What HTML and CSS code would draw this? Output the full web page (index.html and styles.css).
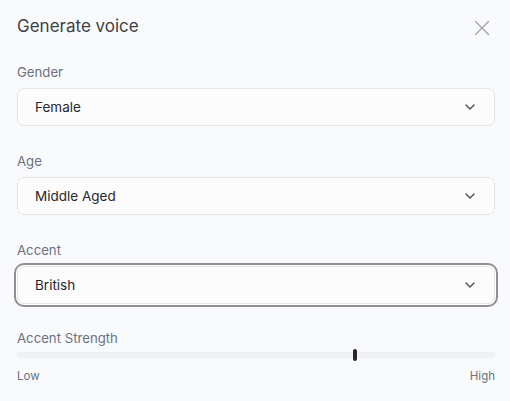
FILE: index.html
```html
<!DOCTYPE html>
<html lang="en">
<head>
<meta charset="utf-8">
<link rel="stylesheet" href="styles.css">
</head>
<body>
<div class="panel">
  <div class="header">
    <h1 class="title">Generate voice</h1>
    <button class="close" aria-label="Close">
      <svg width="16" height="16" viewBox="0 0 16 16" fill="none" stroke="currentColor" stroke-width="1.3" stroke-linecap="round"><path d="M1.5 1.5L14.5 14.5M14.5 1.5L1.5 14.5"/></svg>
    </button>
  </div>
  <div class="fields">
    <div class="field">
      <div class="label">Gender</div>
      <div class="select"><span>Female</span>
        <svg class="chev" width="16" height="16" viewBox="0 0 24 24" fill="none" stroke="currentColor" stroke-width="2.2" stroke-linecap="round" stroke-linejoin="round"><path d="M6 9l6 6 6-6"/></svg>
      </div>
    </div>
    <div class="field">
      <div class="label">Age</div>
      <div class="select"><span>Middle Aged</span>
        <svg class="chev" width="16" height="16" viewBox="0 0 24 24" fill="none" stroke="currentColor" stroke-width="2.2" stroke-linecap="round" stroke-linejoin="round"><path d="M6 9l6 6 6-6"/></svg>
      </div>
    </div>
    <div class="field">
      <div class="label">Accent</div>
      <div class="select focused"><span>British</span>
        <svg class="chev" width="16" height="16" viewBox="0 0 24 24" fill="none" stroke="currentColor" stroke-width="2.2" stroke-linecap="round" stroke-linejoin="round"><path d="M6 9l6 6 6-6"/></svg>
      </div>
    </div>
    <div class="field strength">
      <div class="label">Accent Strength</div>
      <div class="slider">
        <div class="track"></div>
        <div class="thumb" style="left: 70.2%"></div>
      </div>
      <div class="range-labels"><span>Low</span><span>High</span></div>
    </div>
  </div>
</div>
</body>
</html>
```
FILE: styles.css
```css
* { box-sizing: border-box; }
html, body { margin: 0; padding: 0; }
body {
  background: #f9fafb;
  font-family: "Inter", "Liberation Sans", sans-serif;
  width: 510px;
  height: 401px;
  overflow: hidden;
}
.panel {
  padding: 12px 15px 0 17px;
}
.header {
  display: flex;
  justify-content: space-between;
  align-items: flex-start;
  height: 28px;
}
.title {
  margin: 0;
  font-size: 17px;
  line-height: 28px;
  font-weight: 400;
  color: #3f3f46;
}
.close {
  border: 0;
  background: none;
  padding: 0;
  margin: 8px 5px 0 0;
  width: 16px;
  height: 16px;
  color: #a1a1aa;
  display: block;
}
.close svg { display: block; }
.fields {
  margin-top: 22px;
  display: flex;
  flex-direction: column;
  gap: 25px;
}
.field {
  display: flex;
  flex-direction: column;
}
.field.strength {
  margin-top: -1px;
}
.label {
  font-size: 13.2px;
  line-height: 20px;
  color: #6b7280;
  margin-bottom: 6px;
}
.select {
  height: 38px;
  border: 1px solid #e4e4e7;
  border-radius: 7px;
  background: #fcfcfd;
  display: flex;
  align-items: center;
  justify-content: space-between;
  padding: 0 16px 0 17px;
  font-size: 13.5px;
  color: #27272a;
}
.select.focused {
  box-shadow: 0 0 0 1px #ffffff, 0 0 0 3px #8e8e93;
}
.chev {
  color: #52525b;
  display: block;
}
.slider {
  position: relative;
  height: 12px;
  margin-top: -5px;
  display: flex;
  align-items: center;
}
.track {
  flex: 1;
  height: 6px;
  border-radius: 3px;
  background: #f0f1f5;
}
.thumb {
  position: absolute;
  top: 0;
  width: 4px;
  height: 12px;
  border-radius: 2px;
  background: #27272a;
}
.range-labels {
  display: flex;
  justify-content: space-between;
  margin-top: 7px;
  font-size: 11.5px;
  line-height: 16px;
  color: #6b7280;
}
```
